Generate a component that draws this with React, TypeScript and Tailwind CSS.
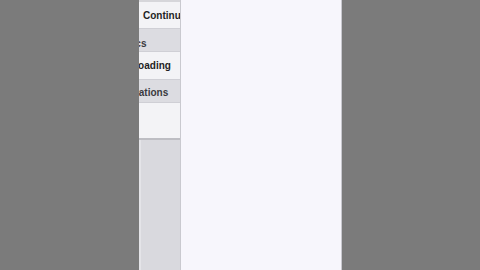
export default function App() {
	return (
		<div className="flex h-[270px] w-[480px] overflow-hidden bg-[#7b7b7b] font-['Liberation_Sans',Arial,sans-serif]">
			<div className="w-[139px] shrink-0" />

			{/* phone screen */}
			<div className="flex w-[203px] shrink-0">
				{/* sidebar, scrolled sideways */}
				<div className="flex w-[42px] shrink-0 flex-col overflow-hidden border-r border-[#c9c9cf] bg-[#d9d9de] text-[10px] font-bold text-[#1f1f24]">
					<div className="flex h-[28px] items-center whitespace-nowrap border-t-[2px] border-[#d6d6da] bg-[#f3f3f6] pt-[1px]">
						<span className="ml-[4px]">Continue</span>
					</div>
					<div className="flex h-[24px] items-center whitespace-nowrap border-y border-[#cfcfd5] bg-[#dcdce1] pt-[6px] text-[#3a3a40]">
						<span className="ml-[-24px]">Topics</span>
					</div>
					<div className="flex h-[27px] items-center whitespace-nowrap bg-[#f3f3f6]">
						<span className="ml-[-7px]">Loading</span>
					</div>
					<div className="flex h-[24px] items-center whitespace-nowrap border-y border-[#cfcfd5] bg-[#dcdce1] pt-[3px] text-[#3a3a40]">
						<span className="ml-[-18px]">Locations</span>
					</div>
					<div className="h-[37px] border-b-[2px] border-[#bdbdc3] bg-[#f3f3f6]" />
					<div className="flex-1 border-l-[2px] border-[#e4e4e8] bg-[#d9d9de]" />
				</div>

				{/* content */}
				<div className="flex-1 border-r border-[#c8c8cf] bg-[#f7f6fc]" />
			</div>

			<div className="flex-1" />
		</div>
	);
}
